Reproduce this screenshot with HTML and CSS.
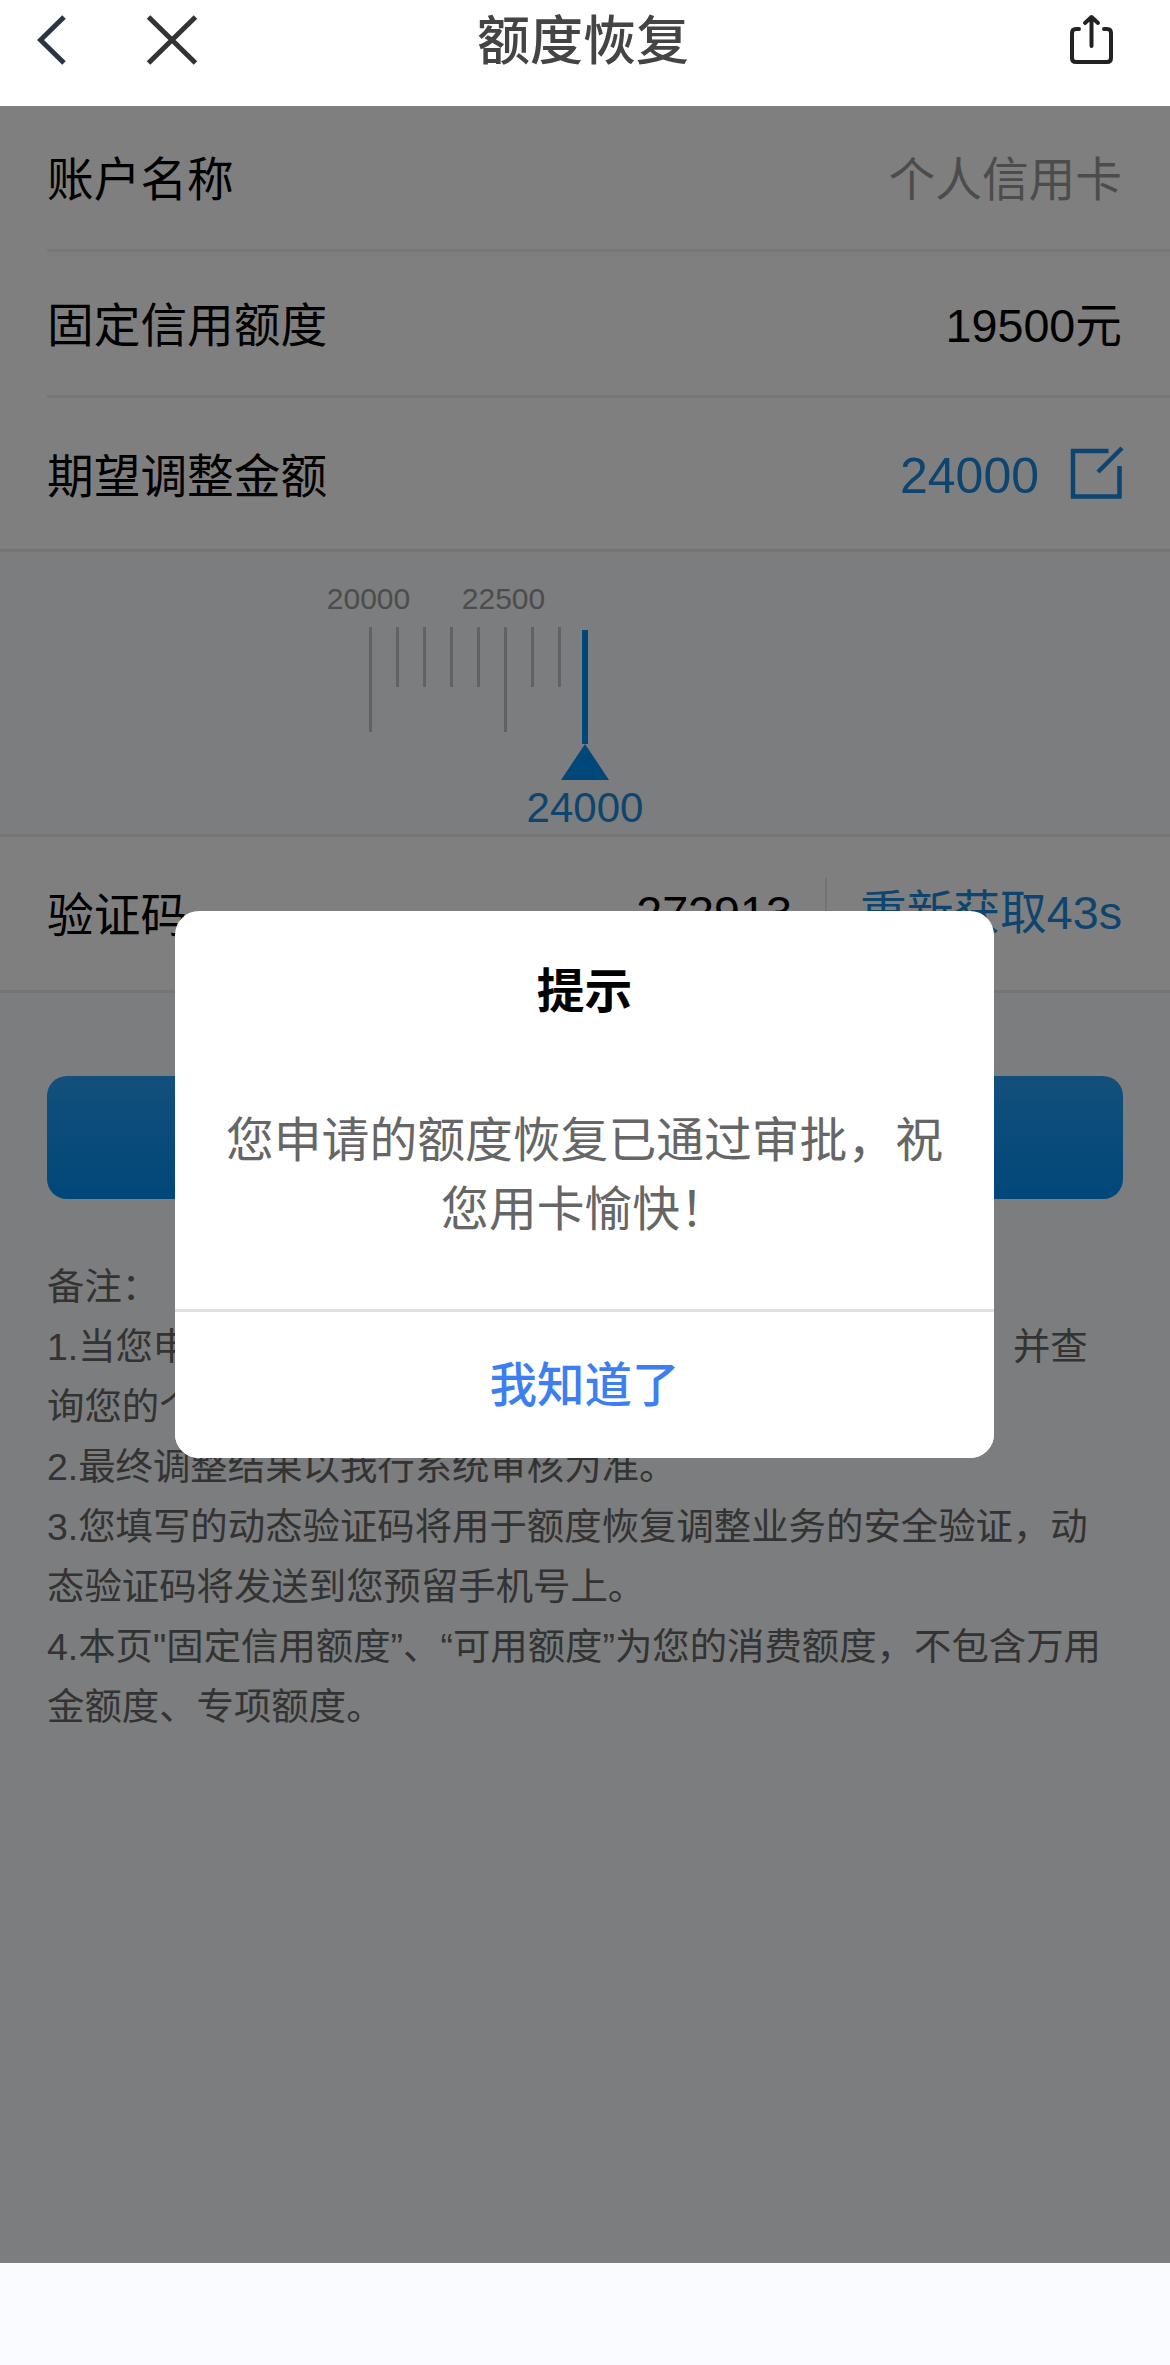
FILE: index.html
```
<!DOCTYPE html>
<html lang="zh-CN">

<head>
    <meta charset="UTF-8">
    <meta name="viewport" content="width=device-width, initial-scale=1.0">
    <title>额度恢复</title>
    <link rel="stylesheet" href="styles.css">
</head>

<body>
    <header class="navbar">
        <div class="nav-left">
            <svg class="icon-back" width="31" height="52" viewBox="0 0 31 52" fill="none" stroke="#2b3440" stroke-width="5">
                <path d="M27 3 L3.500 26 L27 49" />
            </svg>
            <svg class="icon-close" width="52" height="52" viewBox="0 0 52 52" fill="none" stroke="#333" stroke-width="5">
                <path d="M2.500 3 L49.500 49 M49.500 3 L2.500 49" />
            </svg>
        </div>
        <h1>额度恢复</h1>
        <svg class="icon-share" width="46" height="52" viewBox="0 0 46 52" fill="none" stroke="#222" stroke-width="4" stroke-linecap="round" stroke-linejoin="round">
            <path d="M9 15 H6 Q2 15 2 19 V44 Q2 48 6 48 H37 Q41 48 41 44 V19 Q41 15 37 15 H34" />
            <path d="M21.500 32 V3 M15 9 L21.500 3 L28 9" />
        </svg>
    </header>

    <main class="page">
        <section class="list">
            <div class="row">
                <span>账户名称</span>
                <span class="gray">个人信用卡</span>
            </div>
            <div class="row">
                <span>固定信用额度</span>
                <span>19500元</span>
            </div>
            <div class="row row-amount">
                <span>期望调整金额</span>
                <div class="amount">
                    <span>24000</span>
                    <svg class="icon-edit" width="54" height="54" viewBox="0 0 54 54" fill="none" stroke="#1b8bdc" stroke-width="4.500">
                        <path d="M38.500 5 H3 V50.500 H49.500 V20" />
                        <path d="M28 26 L52 2" />
                    </svg>
                </div>
            </div>
        </section>

        <section class="ruler">
            <div class="scale">
                <div class="tick long"><span>20000</span></div>
                <div class="tick"></div>
                <div class="tick"></div>
                <div class="tick"></div>
                <div class="tick"></div>
                <div class="tick long"><span>22500</span></div>
                <div class="tick"></div>
                <div class="tick"></div>
            </div>
            <div class="pointer">
                <div class="needle"></div>
                <div class="triangle"></div>
                <span>24000</span>
            </div>
        </section>

        <section class="row row-code">
            <span>验证码</span>
            <div class="code">
                <span>272913</span>
                <span class="resend">重新获取43s</span>
            </div>
        </section>

        <button class="submit"></button>

        <div class="notes">
            <p>备注：</p>
            <p>1.当您申请额度恢复调整业务时即视为您已授权同意我行，并查<br>询您的个人信用报告。</p>
            <p>2.最终调整结果以我行系统审核为准。</p>
            <p>3.您填写的动态验证码将用于额度恢复调整业务的安全验证，动<br>态验证码将发送到您预留手机号上。</p>
            <p>4.本页"固定信用额度”、“可用额度”为您的消费额度，不包含万用<br>金额度、专项额度。</p>
        </div>

        <div class="mask">
            <div class="dialog">
                <h2>提示</h2>
                <p>您申请的额度恢复已通过审批，祝<br>您用卡愉快！</p>
                <button>我知道了</button>
            </div>
        </div>
    </main>
</body>

</html>
```
FILE: styles.css
```
* {
    box-sizing: border-box;
    margin: 0;
    padding: 0;
}

body {
    width: 1170px;
    height: 2365px;
    background-color: #fafbff;
    font-family: "Liberation Sans", "Noto Sans CJK SC", sans-serif;
    font-size: 46.7px;
    color: #000;
    overflow: hidden;
}

button {
    border: none;
    font-family: inherit;
}

/* top bar */
.navbar {
    height: 106px;
    padding: 14px 54px 0 37px;
    background-color: #fff;
    display: grid;
    grid-template-columns: 1fr auto 1fr;
    align-items: start;
}

.nav-left {
    display: flex;
    gap: 78px;
}

.navbar h1 {
    font-size: 53px;
    font-weight: 500;
    line-height: 54px;
    color: #444;
    padding: 1px 0 0 13px;
}

.icon-share {
    justify-self: end;
}

/* page */
.page {
    position: relative;
    height: 2157px;
    background-color: #f8fafc;
}

.list {
    background-color: #fff;
}

.row {
    display: flex;
    justify-content: space-between;
    align-items: center;
    height: 146px;
    margin-left: 47px;
    padding: 0 48px 5px 0;
    border-bottom: 3px solid #efefef;
}

.row-amount {
    height: 154px;
    margin-left: 0;
    padding: 0 46px 3px 47px;
    border-color: #eaeaec;
}

.gray {
    color: #999;
}

.amount {
    display: flex;
    align-items: center;
    gap: 31px;
    padding-top: 2px;
    font-size: 50px;
    color: #1b8bdc;
}

.amount span {
    padding-top: 6px;
}

/* ruler */
.ruler {
    display: flex;
    align-items: flex-start;
    height: 285px;
    padding: 75px 0 0 369px;
    border-bottom: 3px solid #eaeaec;
}

.scale {
    display: flex;
    gap: 24px;
}

.tick {
    width: 3px;
    height: 60px;
    background-color: #c4c4c6;
}

.tick.long {
    position: relative;
    height: 105px;
}

.tick span {
    position: absolute;
    left: 50%;
    bottom: 118px;
    transform: translateX(-50%);
    margin-left: -2px;
    line-height: 30px;
    font-size: 30px;
    color: #999;
}

.pointer {
    display: flex;
    flex-direction: column;
    align-items: center;
    width: 120px;
    margin-left: -36px;
    padding-top: 3px;
    color: #1b8bdc;
    font-size: 42px;
    line-height: 56px;
}

.needle {
    width: 6px;
    height: 114px;
    background-color: #0090f4;
}

.triangle {
    width: 0;
    border: 24px solid transparent;
    border-top: 0;
    border-bottom: 36px solid #0090f4;
}

/* verification code */
.row-code {
    height: 156px;
    margin-left: 0;
    padding: 0 48px 4px 47px;
    background-color: #fff;
    border-color: #eaeaec;
}

.code {
    display: flex;
    align-items: center;
    padding-top: 3px;
}

.resend {
    margin-left: 33px;
    padding-left: 33px;
    line-height: 70px;
    border-left: 2px solid #e6e6e6;
    color: #1b8bdc;
}

.submit {
    display: block;
    width: 1076px;
    height: 123px;
    margin: 83px 0 0 47px;
    border-radius: 20px;
    background: linear-gradient(#279ff8, #0090f4);
}

.notes {
    margin: 58px 0 0 47px;
    font-size: 37.4px;
    line-height: 60px;
    color: #666;
    white-space: nowrap;
}

/* dialog */
.mask {
    position: absolute;
    inset: 0;
    display: flex;
    justify-content: center;
    align-items: flex-start;
    padding: 805px 1px 0 0;
    background-color: rgba(0, 0, 0, 0.5);
}

.dialog {
    width: 819px;
    height: 547px;
    border-radius: 24px;
    background-color: #fff;
    text-align: center;
    display: flex;
    flex-direction: column;
    overflow: hidden;
}

.dialog h2 {
    margin-top: 46px;
    font-size: 47.8px;
    line-height: 70px;
}

.dialog p {
    margin-top: 79px;
    font-size: 47.8px;
    line-height: 69px;
    color: #666;
}

.dialog button {
    margin-top: auto;
    height: 149px;
    padding-bottom: 7px;
    border-top: 3px solid #e0e0e2;
    background-color: #fff;
    color: #3d7ef0;
    font-size: 47.5px;
    font-weight: 500;
}
```
